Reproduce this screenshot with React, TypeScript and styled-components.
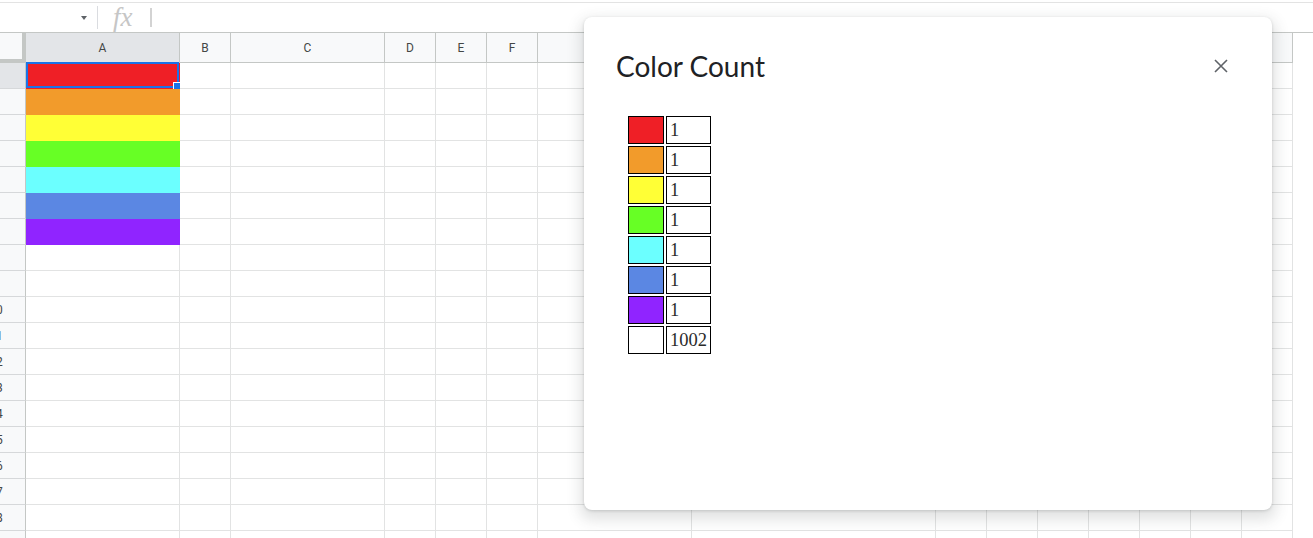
import React from "react";
import styled, { createGlobalStyle } from "styled-components";

interface Column {
  label: string;
  width: number;
}

const COLUMNS: Column[] = [
  { label: "A", width: 154 },
  { label: "B", width: 51 },
  { label: "C", width: 154 },
  { label: "D", width: 51 },
  { label: "E", width: 51 },
  { label: "F", width: 51 },
  { label: "G", width: 154 },
  { label: "H", width: 244 },
  { label: "I", width: 51 },
  { label: "J", width: 51 },
  { label: "K", width: 51 },
  { label: "L", width: 51 },
  { label: "M", width: 51 },
  { label: "N", width: 51 },
  { label: "O", width: 51 },
];

const FILLS = [
  "#ef1f26",
  "#f29b2b",
  "#ffff36",
  "#67ff25",
  "#6bffff",
  "#5b87e3",
  "#9024ff",
];

const COUNTS: { color?: string; count: number }[] = [
  ...FILLS.map((color) => ({ color, count: 1 })),
  { count: 1002 },
];

const ROW_COUNT = 19;

const GlobalStyle = createGlobalStyle`
  html, body {
    margin: 0;
    padding: 0;
    background: #fff;
  }

  body {
    font-family: Roboto, "Liberation Sans", Arial, sans-serif;
    overflow: hidden;
  }
`;

const App = () => {
  return (
    <Page>
      <GlobalStyle />

      <FormulaBar>
        <NameBox>
          <Caret />
        </NameBox>
        <Divider />
        <Fx>fx</Fx>
        <Cursor />
      </FormulaBar>

      <Sheet>
        <HeaderRow>
          <Corner />
          {COLUMNS.map((col) => (
            <ColHeader key={col.label} $w={col.width} $active={col.label === "A"}>
              {col.label}
            </ColHeader>
          ))}
        </HeaderRow>

        {Array.from({ length: ROW_COUNT }, (_, r) => (
          <GridRow key={r}>
            <RowHeader $active={r === 0}>
              <RowLabel>{r + 1}</RowLabel>
            </RowHeader>
            {COLUMNS.map((col, c) => (
              <Cell key={col.label} $w={col.width} $fill={c === 0 ? FILLS[r] : undefined}>
                {r === 0 && c === 0 && (
                  <Selection>
                    <Handle />
                  </Selection>
                )}
              </Cell>
            ))}
          </GridRow>
        ))}
      </Sheet>

      <Dialog>
        <DialogHeader>
          <Title>Color Count</Title>
          <CloseButton aria-label="Close">
            <svg width="14" height="14" viewBox="0 0 14 14">
              <path
                d="M1 1 L13 13 M13 1 L1 13"
                stroke="currentColor"
                strokeWidth="1.6"
                fill="none"
              />
            </svg>
          </CloseButton>
        </DialogHeader>

        <CountTable>
          <tbody>
            {COUNTS.map((row, i) => (
              <tr key={i}>
                <Swatch $color={row.color} />
                <Count>{row.count}</Count>
              </tr>
            ))}
          </tbody>
        </CountTable>
      </Dialog>
    </Page>
  );
};

const Page = styled.div`
  position: relative;
  width: 1313px;
  height: 538px;
  overflow: hidden;
`;

const FormulaBar = styled.div`
  margin-top: 2px;
  height: 31px;
  box-sizing: border-box;
  border-top: 1px solid #e3e3e3;
  border-bottom: 1px solid #c4c7c5;
  display: flex;
  align-items: center;
`;

const NameBox = styled.div`
  width: 97px;
  height: 100%;
  box-sizing: border-box;
  padding-right: 10px;
  display: flex;
  align-items: center;
  justify-content: flex-end;
`;

const Caret = styled.span`
  width: 0;
  height: 0;
  border-left: 3px solid transparent;
  border-right: 3px solid transparent;
  border-top: 4px solid #5f6368;
`;

const Divider = styled.span`
  width: 1px;
  height: 23px;
  background: #dadce0;
`;

const Fx = styled.span`
  margin-left: 15px;
  font-family: "Liberation Serif", serif;
  font-style: italic;
  font-size: 27px;
  line-height: 1;
  color: #c6c6c6;
`;

const Cursor = styled.span`
  margin-left: 17px;
  width: 2px;
  height: 19px;
  background: #d3d3d3;
`;

const Sheet = styled.div`
  display: flex;
  flex-direction: column;
`;

const HeaderRow = styled.div`
  display: flex;
  height: 30px;
`;

const Corner = styled.div`
  width: 26px;
  flex: none;
  box-sizing: border-box;
  background: #f8f9fa;
  border-right: 4px solid #c4c7c5;
  border-bottom: 4px solid #c4c7c5;
`;

const ColHeader = styled.div<{ $w: number; $active?: boolean }>`
  width: ${(p) => p.$w}px;
  flex: none;
  box-sizing: border-box;
  border-right: 1px solid #c4c7c5;
  border-bottom: 1px solid #c4c7c5;
  background: ${(p) => (p.$active ? "#e3e5e8" : "#f8f9fa")};
  display: flex;
  align-items: center;
  justify-content: center;
  font-size: 12px;
  color: #444746;
`;

const GridRow = styled.div`
  display: flex;
  height: 26px;
`;

const RowHeader = styled.div<{ $active?: boolean }>`
  width: 26px;
  flex: none;
  box-sizing: border-box;
  border-right: 1px solid #c4c7c5;
  border-bottom: 1px solid #d6d8da;
  background: ${(p) => (p.$active ? "#e3e5e8" : "#f8f9fa")};
  overflow: hidden;
  display: flex;
  align-items: center;
  font-size: 12px;
  color: #444746;
`;

const RowLabel = styled.span`
  flex: none;
  width: 50px;
  margin-left: -29px;
  text-align: center;
`;

const Cell = styled.div<{ $w: number; $fill?: string }>`
  position: relative;
  width: ${(p) => p.$w}px;
  flex: none;
  box-sizing: border-box;
  background: ${(p) => p.$fill ?? "#fff"};
  border-right: 1px solid ${(p) => (p.$fill ? "transparent" : "#e2e3e3")};
  border-bottom: 1px solid ${(p) => (p.$fill ? "transparent" : "#e2e3e3")};
`;

const Selection = styled.div`
  position: absolute;
  top: -1px;
  left: 0;
  right: 0;
  bottom: 0;
  border: 2px solid #1a73e8;
  pointer-events: none;
`;

const Handle = styled.div`
  position: absolute;
  right: -4px;
  bottom: -4px;
  width: 8px;
  height: 8px;
  box-sizing: border-box;
  border: 1px solid #fff;
  background: #1a73e8;
`;

const Dialog = styled.div`
  position: absolute;
  left: 584px;
  top: 17px;
  width: 688px;
  height: 493px;
  box-sizing: border-box;
  padding: 31px 39px 0 32px;
  background: #fff;
  border-radius: 8px;
  box-shadow: 0 6px 14px 4px rgba(60, 64, 67, 0.15),
    0 1px 3px rgba(60, 64, 67, 0.2);
`;

const DialogHeader = styled.div`
  display: flex;
  align-items: center;
  justify-content: space-between;
`;

const Title = styled.h1`
  margin: 0;
  font-family: Lato, "Open Sans", sans-serif;
  font-weight: 400;
  font-size: 28px;
  line-height: 36px;
  color: #202124;
`;

const CloseButton = styled.button`
  width: 24px;
  height: 24px;
  padding: 0;
  border: none;
  background: none;
  color: #5f6368;
  display: flex;
  align-items: center;
  justify-content: center;
  cursor: pointer;
`;

const CountTable = styled.table`
  margin: 30px 0 0 10px;
  border-collapse: separate;
  border-spacing: 2px;
  font-family: "Liberation Serif", "Times New Roman", serif;
  font-size: 18.5px;
  color: #2a2a2a;
`;

const Swatch = styled.td<{ $color?: string }>`
  width: 36px;
  height: 28px;
  box-sizing: border-box;
  padding: 0;
  border: 1px solid #000;
  background: ${(p) => p.$color ?? "#fff"};
`;

const Count = styled.td`
  width: 45px;
  height: 28px;
  box-sizing: border-box;
  padding: 0 0 0 3px;
  border: 1px solid #000;
  line-height: 1;
`;

export default App;
